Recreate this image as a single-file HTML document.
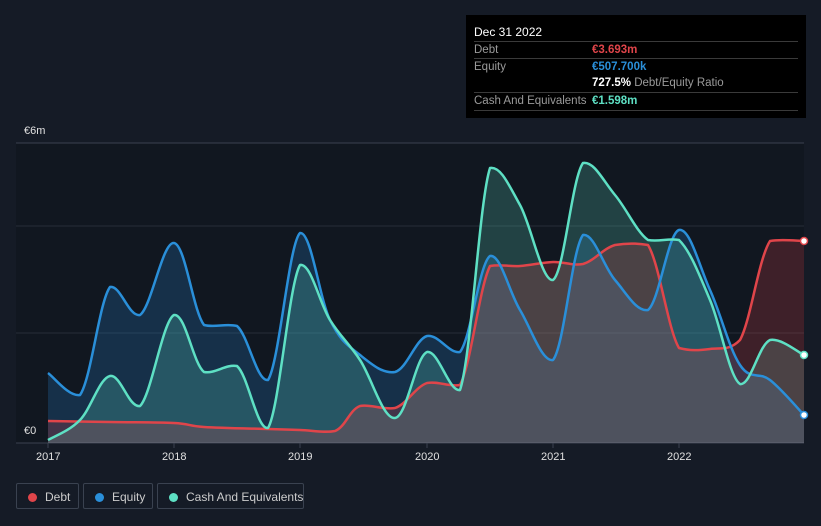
<!DOCTYPE html>
<html><head><style>
body{margin:0;width:821px;height:526px;background:#151b26;font-family:"Liberation Sans",sans-serif;overflow:hidden;position:relative}
.tip{position:absolute;left:466px;top:15px;width:340px;height:103px;background:#000;}
.tip .h{position:absolute;left:8px;top:10px;color:#fff;font-size:12px}
.row{position:absolute;left:8px;width:324px;border-top:1px solid #3a3a3a;font-size:11.5px;color:#9a9a9a;height:17px;line-height:17px;white-space:nowrap}
.row span{position:absolute;left:118px;font-weight:bold}
.lg{position:absolute;top:483px;height:26px;border:1px solid #3a4250;border-radius:2px;color:#ccc;font-size:12px;line-height:26px;box-sizing:border-box;white-space:nowrap}
.lg i{display:inline-block;width:9px;height:9px;border-radius:50%;margin:0 8px 0 11px;vertical-align:-1px}
.ax{position:absolute;color:#e0e0e0;font-size:11px}
</style></head><body>
<svg width="821" height="526" style="position:absolute;left:0;top:0">
<rect x="16" y="143" width="788" height="300" fill="#111720"/>
<line x1="16" y1="143" x2="804" y2="143" stroke="#3a4250"/>
<line x1="16" y1="226" x2="804" y2="226" stroke="#262d38"/>
<line x1="16" y1="333" x2="804" y2="333" stroke="#262d38"/>
<line x1="16" y1="443" x2="804" y2="443" stroke="#3a4250"/>
<g stroke-width="2.5" fill-opacity="0.22" stroke-linejoin="round">
<path id="ef" fill="#2a8fd9" stroke="none"/>
<path id="cf" fill="#5ee0c4" stroke="none"/>
<path id="df" fill="#e0454a" stroke="none"/>
<path id="dl" fill="none" stroke="#e0454a"/>
<path id="el" fill="none" stroke="#2a8fd9"/>
<path id="cl" fill="none" stroke="#5ee0c4"/>
</g>
<circle cx="804" cy="241" r="3.5" fill="#fff" stroke="#e0454a" stroke-width="1.5"/>
<circle cx="804" cy="355" r="3.5" fill="#fff" stroke="#5ee0c4" stroke-width="1.5"/>
<circle cx="804" cy="415" r="3.5" fill="#fff" stroke="#2a8fd9" stroke-width="1.5"/>
<g stroke="#3a4250"><line x1="48" y1="443" x2="48" y2="448"/><line x1="174" y1="443" x2="174" y2="448"/><line x1="300" y1="443" x2="300" y2="448"/><line x1="427" y1="443" x2="427" y2="448"/><line x1="553" y1="443" x2="553" y2="448"/><line x1="679" y1="443" x2="679" y2="448"/></g>
</svg>
<script>
function sm(p){var d="M"+p[0][0]+","+p[0][1];for(var i=0;i<p.length-1;i++){var a=p[i-1]||p[i],b=p[i],c=p[i+1],e=p[i+2]||c;var t=0.18;
var c1x=b[0]+(c[0]-a[0])*t,c1y=b[1]+(c[1]-a[1])*t,c2x=c[0]-(e[0]-b[0])*t,c2y=c[1]-(e[1]-b[1])*t;
c1y=Math.max(Math.min(c1y,Math.max(b[1],c[1])+2),Math.min(b[1],c[1])-2);c2y=Math.max(Math.min(c2y,Math.max(b[1],c[1])+2),Math.min(b[1],c[1])-2);
d+=" C"+c1x.toFixed(1)+","+c1y.toFixed(1)+" "+c2x.toFixed(1)+","+c2y.toFixed(1)+" "+c[0]+","+c[1];}return d;}
var E=[[48,373],[80,395],[110,287],[140,315],[174,243],[204,325],[237,326],[268,380],[300,233],[330,320],[360,355],[395,372],[427,336],[460,352],[490,256],[520,310],[553,360],[583,235],[615,280],[648,310],[679,230],[710,290],[740,365],[770,380],[804,415]];
var C=[[48,440],[80,420],[110,376],[140,406],[174,315],[204,372],[237,366],[268,428],[300,265],[330,320],[360,360],[395,418],[427,352],[460,390],[490,168],[520,205],[553,280],[583,163],[615,195],[648,240],[679,240],[710,300],[740,384],[770,340],[804,355]];
var D=[[48,421],[110,422],[174,423],[204,427],[268,429],[300,430],[335,431],[360,406],[395,408],[427,383],[460,385],[490,266],[520,266],[553,262],[583,264],[615,245],[648,245],[679,348],[710,349],[740,340],[770,241],[804,241]];
function s(id,p,f){document.getElementById(id).setAttribute("d",sm(p)+(f?" L804,443 L48,443Z":""));}
s("ef",E,1);s("cf",C,1);s("df",D,1);s("el",E);s("cl",C);s("dl",D);
</script>
<div class="ax" style="left:24px;top:125px">€6m</div>
<div class="ax" style="left:24px;top:425px">€0</div>
<div class="ax" style="left:36px;top:451px">2017</div>
<div class="ax" style="left:162px;top:451px">2018</div>
<div class="ax" style="left:288px;top:451px">2019</div>
<div class="ax" style="left:415px;top:451px">2020</div>
<div class="ax" style="left:541px;top:451px">2021</div>
<div class="ax" style="left:667px;top:451px">2022</div>
<div class="tip">
<div class="h">Dec 31 2022</div>
<div class="row" style="top:26px">Debt<span style="color:#e0454a">€3.693m</span></div>
<div class="row" style="top:43px">Equity<span style="color:#2a8fd9">€507.700k</span></div>
<div class="row" style="top:60px;border-top:none"><span style="color:#fff">727.5% <b style="color:#9a9a9a;font-weight:normal">Debt/Equity Ratio</b></span></div>
<div class="row" style="top:77px;border-bottom:1px solid #3a3a3a">Cash And Equivalents<span style="color:#5ee0c4">€1.598m</span></div>
</div>
<div class="lg" style="left:16px;width:63px"><i style="background:#e0454a"></i>Debt</div>
<div class="lg" style="left:83px;width:70px"><i style="background:#2a8fd9"></i>Equity</div>
<div class="lg" style="left:157px;width:147px"><i style="background:#5ee0c4"></i>Cash And Equivalents</div>
</body></html>
